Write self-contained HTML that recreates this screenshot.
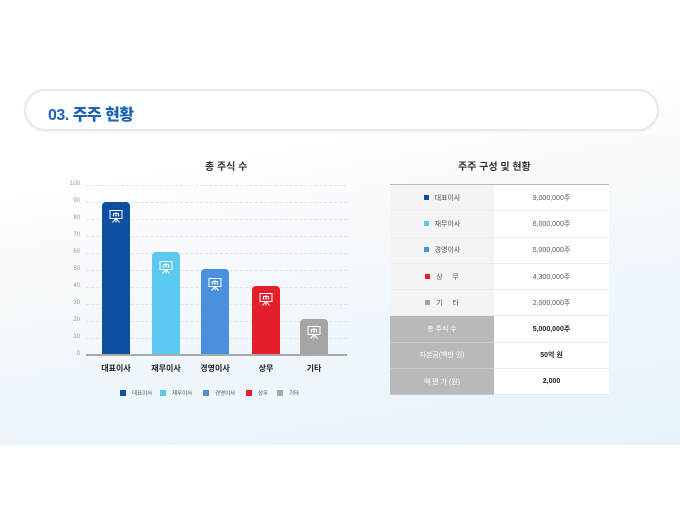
<!DOCTYPE html>
<html><head><meta charset="utf-8"><style>
*{margin:0;padding:0;box-sizing:border-box}
body{width:680px;height:510px;overflow:hidden;background:#fff;font-family:"Liberation Sans","Noto Sans CJK KR",sans-serif;position:relative}
.bg{position:absolute;left:0;top:0;width:680px;height:445px;background:linear-gradient(170deg,#ffffff 30%,#f3f8fc 60%,#e6f3fb 100%)}
.pill{position:absolute;left:24px;top:89px;width:635px;height:42px;border:2px solid #e6e9ee;border-radius:21px;background:#fdfeff;box-shadow:0 1px 2px rgba(0,0,0,.05)}
.pill span{position:absolute;left:22px;top:10px;font-size:16px;font-weight:900;color:#1e63b0;letter-spacing:-0.5px}
.t{position:absolute;font-size:10px;color:#333;font-weight:bold}
.ax{position:absolute;left:60px;width:20px;text-align:right;font-size:6px;color:#999}
.gl{position:absolute;left:86px;width:261px;border-top:1px dashed #e2e6ea}
.bar{position:absolute;width:28px;border-radius:4px 4px 0 0}
.bar svg{position:absolute;left:7px;width:14px;height:14px}
.lb{position:absolute;top:363px;width:50px;text-align:center;font-size:8px;font-weight:bold;color:#222}
.lg{position:absolute;top:389px;font-size:5.5px;color:#555}
.lg i{display:inline-block;width:6px;height:6px;margin-right:6px;vertical-align:-1px}
table{position:absolute;left:390px;top:184px;width:219px;border-collapse:collapse;border-top:1px solid #bbb;border-bottom:1px solid #bbb}
td{height:26.3px;font-size:7px;color:#555;text-align:center;border-bottom:1px solid #ececec;background:#fff}
td.l{width:104px;background:#f4f4f4}
td.g{background:#b9b9b9;color:#fff;border-bottom:1px solid #c8c8c8}
td.b{font-weight:bold;color:#222}
td i{display:inline-block;width:5px;height:5px;margin-right:6px}
</style></head><body>
<div class="bg"></div>
<div class="pill"><span>03. 주주 현황</span></div>
<div class="t" style="left:205px;top:158px">총 주식 수</div>
<div class="t" style="left:458px;top:158px">주주 구성 및 현황</div>

<div class="ax" style="top:181px">100</div><div class="gl" style="top:185px"></div>
<div class="ax" style="top:198px">90</div><div class="gl" style="top:202px"></div>
<div class="ax" style="top:215px">80</div><div class="gl" style="top:219px"></div>
<div class="ax" style="top:232px">70</div><div class="gl" style="top:236px"></div>
<div class="ax" style="top:249px">60</div><div class="gl" style="top:253px"></div>
<div class="ax" style="top:266px">50</div><div class="gl" style="top:270px"></div>
<div class="ax" style="top:283px">40</div><div class="gl" style="top:287px"></div>
<div class="ax" style="top:300px">30</div><div class="gl" style="top:304px"></div>
<div class="ax" style="top:317px">20</div><div class="gl" style="top:321px"></div>
<div class="ax" style="top:334px">10</div><div class="gl" style="top:338px"></div>
<div class="ax" style="top:351px">0</div>

<svg width="0" height="0" style="position:absolute"><defs><g id="ic" fill="none" stroke="#fff" stroke-width="1"><rect x="1" y="1.5" width="12" height="8"/><path d="M7 3v1.5M4.5 6v-1.5h5V6M7 4.5V6M7 9.5v4M7 9.5l-3.5 4M7 9.5l3.5 4"/><rect x="3.8" y="6" width="1.4" height="1.4" fill="#fff" stroke="none"/><rect x="6.3" y="6" width="1.4" height="1.4" fill="#fff" stroke="none"/><rect x="8.8" y="6" width="1.4" height="1.4" fill="#fff" stroke="none"/></g></defs></svg>

<div class="bar" style="left:102px;top:202px;height:153px;background:#0d4fa0"><svg style="top:7px" viewBox="0 0 14 14"><use href="#ic"/></svg></div>
<div class="bar" style="left:152px;top:252px;height:103px;background:#5ccaf0"><svg style="top:8px" viewBox="0 0 14 14"><use href="#ic"/></svg></div>
<div class="bar" style="left:201px;top:269px;height:86px;background:#4a90dc"><svg style="top:8px" viewBox="0 0 14 14"><use href="#ic"/></svg></div>
<div class="bar" style="left:252px;top:286px;height:69px;background:#e51e2c"><svg style="top:6px" viewBox="0 0 14 14"><use href="#ic"/></svg></div>
<div class="bar" style="left:300px;top:319px;height:36px;background:#a5a5a5"><svg style="top:6px" viewBox="0 0 14 14"><use href="#ic"/></svg></div>
<div style="position:absolute;left:86px;top:354px;width:261px;height:2px;background:#aaa"></div>

<div class="lb" style="left:91px">대표이사</div>
<div class="lb" style="left:141px">재무이사</div>
<div class="lb" style="left:190px">경영이사</div>
<div class="lb" style="left:241px">상무</div>
<div class="lb" style="left:289px">기타</div>

<div class="lg" style="left:120px"><i style="background:#0d4fa0"></i>대표이사</div>
<div class="lg" style="left:160px"><i style="background:#5ccaf0"></i>재무이사</div>
<div class="lg" style="left:203px"><i style="background:#4a90dc"></i>경영이사</div>
<div class="lg" style="left:246px"><i style="background:#e51e2c"></i>상무</div>
<div class="lg" style="left:277px"><i style="background:#a5a5a5"></i>기타</div>

<table>
<tr><td class="l"><i style="background:#0d4fa0"></i>대표이사</td><td>9,000,000주</td></tr>
<tr><td class="l"><i style="background:#5ccaf0"></i>재무이사</td><td>6,000,000주</td></tr>
<tr><td class="l"><i style="background:#4a90dc"></i>경영이사</td><td>5,000,000주</td></tr>
<tr><td class="l"><i style="background:#e51e2c"></i>상 &nbsp; &nbsp; 무</td><td>4,300,000주</td></tr>
<tr><td class="l"><i style="background:#a5a5a5"></i>기 &nbsp; &nbsp; 타</td><td>2,000,000주</td></tr>
<tr><td class="l g">총 주식 수</td><td class="b">5,000,000주</td></tr>
<tr><td class="l g">자본금(백만 원)</td><td class="b">50억 원</td></tr>
<tr><td class="l g">액 면 가 (원)</td><td class="b">2,000</td></tr>
</table>
</body></html>
